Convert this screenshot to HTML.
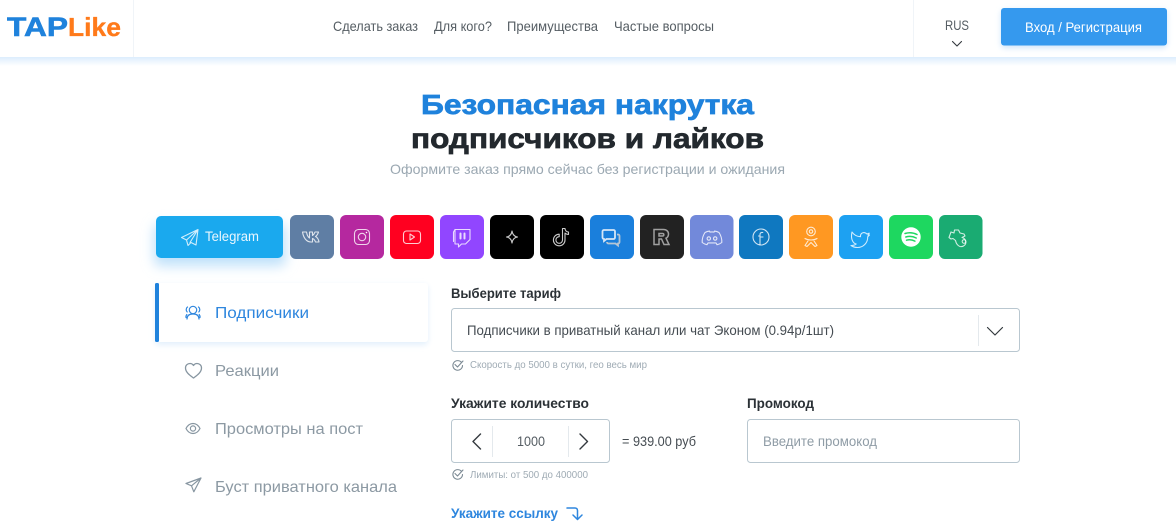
<!DOCTYPE html>
<html lang="ru"><head><meta charset="utf-8"><title>TAPLike</title>
<style>
html,body{margin:0;padding:0;width:1176px;height:526px;overflow:hidden;background:#fff}
svg{position:absolute;left:0;top:0;display:block}
text{font-family:"Liberation Sans","DejaVu Sans",sans-serif;white-space:pre}
.n{font-size:14px;fill:#555d63}
.b{font-weight:700;font-size:13.500px;fill:#2b3136}
.t{font-weight:700;font-size:28px;stroke-width:.7px}
.s{font-size:16px;fill:#8c99a3}
.h{font-size:10.500px;fill:#9fabb4}
.ic{fill:none;stroke:#fff;stroke-width:1.1;stroke-linecap:round;stroke-linejoin:round;opacity:.8}
.g{fill:none;stroke:#8796a1;stroke-linecap:round;stroke-linejoin:round}
.d{fill:none;stroke:#33393e;stroke-linecap:round;stroke-linejoin:round}
</style></head><body>
<svg width="1176" height="526" viewBox="0 0 1176 526" xmlns="http://www.w3.org/2000/svg">
<defs>
<linearGradient id="hs" x1="0" y1="0" x2="0" y2="1"><stop offset="0" stop-color="#dcedfd"/><stop offset="1" stop-color="#fff"/></linearGradient>
<filter id="f1" x="-20%" y="-50%" width="140%" height="220%"><feGaussianBlur stdDeviation="6"/></filter>
<filter id="f2" x="-10%" y="-30%" width="120%" height="170%"><feGaussianBlur stdDeviation="3"/></filter>
<filter id="f3" x="-10%" y="-40%" width="120%" height="200%"><feGaussianBlur stdDeviation="3"/></filter>
</defs>
<!-- header -->
<rect x="0" y="57" width="1176" height="9" fill="url(#hs)"/>
<rect x="133" y="0" width="1" height="57" fill="#f0f4f8"/>
<rect x="913" y="0" width="1" height="57" fill="#f0f4f8"/>
<text x="7" y="36" textLength="61" lengthAdjust="spacingAndGlyphs" style="font-weight:700;font-size:27px;fill:#1f82dc;stroke:#1f82dc;stroke-width:.6px">TAP</text>
<text x="68" y="36" textLength="53" lengthAdjust="spacingAndGlyphs" style="font-weight:700;font-size:26px;fill:#ff7a1a;stroke:#ff7a1a;stroke-width:.3px">Like</text>
<text class="n" x="333" y="31" textLength="85" lengthAdjust="spacingAndGlyphs">Сделать заказ</text>
<text class="n" x="434" y="31" textLength="58" lengthAdjust="spacingAndGlyphs">Для кого?</text>
<text class="n" x="507" y="31" textLength="91" lengthAdjust="spacingAndGlyphs">Преимущества</text>
<text class="n" x="614" y="31" textLength="100" lengthAdjust="spacingAndGlyphs">Частые вопросы</text>
<text class="n" x="945" y="30" textLength="24" lengthAdjust="spacingAndGlyphs" style="font-size:13.500px">RUS</text>
<path d="M952.500 41.500l4.500 4.500 4.500-4.500" class="d" style="stroke-width:1.100px"/>
<rect x="1001" y="10" width="166" height="38" rx="4" fill="#cfe5fa" filter="url(#f2)"/>
<rect x="1001" y="8" width="166" height="37.500" rx="3" fill="#3599ee"/>
<text x="1025" y="32" textLength="117" lengthAdjust="spacingAndGlyphs" style="font-size:14px;fill:#fff">Вход / Регистрация</text>
<!-- title -->
<text class="t" x="421" y="114" textLength="333" lengthAdjust="spacingAndGlyphs" fill="#1f82dc" stroke="#1f82dc">Безопасная накрутка</text>
<text class="t" x="411" y="148" textLength="353" lengthAdjust="spacingAndGlyphs" fill="#23292e" stroke="#23292e">подписчиков и лайков</text>
<text x="390" y="174" textLength="395" lengthAdjust="spacingAndGlyphs" style="font-size:14px;fill:#9ba8b2">Оформите заказ прямо сейчас без регистрации и ожидания</text>
<!-- tabs -->
<rect x="154" y="224" width="132" height="42" rx="6" fill="#bfe1fa" filter="url(#f1)"/>
<rect x="156" y="216" width="127" height="42" rx="5" fill="#1aa9ee"/>
<path class="ic" d="M198 229.500L181.500 237.500l5 2.500 1.500 5.500 3-3 5 2.500zM186.500 240L198 229.500 190 242.500"/>
<text x="205" y="241" textLength="54" lengthAdjust="spacingAndGlyphs" style="font-size:13.500px;fill:#e8f6fe">Telegram</text>
<g>
<rect x="290" y="215" width="44" height="44" rx="6" fill="#5f7ea4"/>
<rect x="340" y="215" width="44" height="44" rx="6" fill="#b5289f"/>
<rect x="390" y="215" width="44" height="44" rx="6" fill="#ff0020"/>
<rect x="440" y="215" width="44" height="44" rx="6" fill="#9146ff"/>
<rect x="490" y="215" width="44" height="44" rx="6" fill="#000"/>
<rect x="540" y="215" width="44" height="44" rx="6" fill="#000"/>
<rect x="590" y="215" width="44" height="44" rx="6" fill="#1a7fdc"/>
<rect x="640" y="215" width="44" height="44" rx="6" fill="#222"/>
<rect x="690" y="215" width="43.500" height="44" rx="6" fill="#7289da"/>
<rect x="739" y="215" width="44" height="44" rx="6" fill="#0f78c0"/>
<rect x="789" y="215" width="44" height="44" rx="6" fill="#ff9822"/>
<rect x="839" y="215" width="44" height="44" rx="6" fill="#1da1f2"/>
<rect x="889" y="215" width="44" height="44" rx="6" fill="#1ed760"/>
<rect x="939" y="215" width="43.500" height="44" rx="6" fill="#1aab72"/>
</g>
<!-- vk -->
<path class="ic" d="M303 232h3.500c.5 3 1.500 5 3 6v-6h3v3.500c1-.7 2-2 2.500-3.500h3.500c-.5 2-2 4-3 4.500 1.500.7 3 2.500 3.500 5.500h-3.500c-.5-1.500-1.500-3-3-3.500v3.500h-1.500c-4.500 0-7.500-4-8.500-10z"/>
<!-- insta -->
<rect class="ic" x="354.500" y="229.500" width="15" height="15" rx="4"/><circle class="ic" cx="362" cy="237" r="3.700"/><circle cx="366.500" cy="232.500" r=".8" fill="#fff"/>
<!-- youtube -->
<rect class="ic" x="403.500" y="231" width="17" height="12.500" rx="3"/><path class="ic" d="M410 234l4.500 3-4.500 3z"/>
<!-- twitch -->
<path class="ic" d="M455 229.500h15v10l-4.500 4.500h-4l-3 3v-3h-3.500zM455 229.500l-1.500 2.500v9.500"/><path class="ic" style="stroke-width:2px" d="M460.500 233.500v5M464.500 233.500v5"/>
<!-- sparkle -->
<path class="ic" d="M512 231c.5 3.500 2 5.500 5.500 6-3.500.5-5 2.500-5.500 6-.5-3.500-2-5.500-5.500-6 3.500-.5 5-2.500 5.500-6z"/>
<!-- tiktok -->
<path class="ic" d="M562.500 228.500v11.500a3.300 3.300 0 1 1-3.300-3.300v-2.500a5.800 5.800 0 1 0 5.800 5.800v-7c1 1 2 1.500 3.500 1.500v-2.500c-2 0-3.500-1.500-3.500-3.500z"/>
<!-- chat -->
<path d="M604 230h9.500a1.500 1.500 0 0 1 1.500 1.500v6a1.500 1.500 0 0 1-1.500 1.500h-7l-2.500 2v-2a1.500 1.500 0 0 1-1.500-1.500v-6a1.500 1.500 0 0 1 1.500-1.500z" fill="none" stroke="#d5e6f7" stroke-width="1.800"/>
<path d="M617 234.500h1a1.500 1.500 0 0 1 1.500 1.500v6a1.500 1.500 0 0 1-1.500 1.500v2l-2.500-2h-7a1.500 1.500 0 0 1-1.500-1.500" fill="none" stroke="#b7c6d4" stroke-width="1.800"/>
<!-- R -->
<path d="M654 229.500h9.500c3 0 5 2 5 4.500 0 2-1 3.500-2.500 4.200l3 6.300h-5l-2.500-5.500h-2.500v5.500H654zM659 233.500v2.500h3.500c1.800 0 1.800-2.500 0-2.500z" fill="none" stroke="#a0a0a0" stroke-width="1.500"/>
<!-- discord -->
<path class="ic" d="M705 232.500c1.500-.8 3-1.200 4.500-1.400l.5 1c1.300-.2 2.700-.2 4 0l.5-1c1.500.2 3 .6 4.500 1.400 2 3 3 6.500 2.800 10-1.400 1.100-3 1.800-4.800 2.200l-1-1.800h-8l-1 1.800c-1.800-.4-3.400-1.100-4.800-2.200-.2-3.500.8-7 2.800-10z"/><circle class="ic" cx="708.800" cy="238.500" r="1.700"/><circle class="ic" cx="715.200" cy="238.500" r="1.700"/>
<!-- fb -->
<circle class="ic" cx="761" cy="237" r="8"/><path class="ic" d="M760 245v-9h-1.500M760 236.500v-2c0-1.500 1-2.200 2.800-2M760.500 237h2.500"/>
<!-- ok -->
<circle class="ic" cx="811" cy="231.500" r="4.300"/><circle class="ic" cx="811" cy="231.500" r="1.700"/><path class="ic" d="M805 238.500c3.500 2 8.500 2 12 0M808 241l-3 4.500 2 1 4-4 4 4 2-1-3-4.500"/>
<!-- twitter -->
<path class="ic" d="M852 232c2 3 5 4.500 8.500 4.700-.4-3 2.500-5 5-3.700.8.400 1 .7 1.500 1l2.200-.8-1.200 2 1.500-.2-1.800 1.800c.2 6-4.300 10.700-10.200 10.700-2.500 0-4.700-.7-6.500-2 2 .2 3.700-.3 5.200-1.500-2.500-.5-6-4-4.200-12z"/>
<!-- spotify -->
<circle cx="911" cy="237" r="9.700" fill="#fff"/>
<path d="M905 233.500c4-1.200 8.500-.8 12 1M905.800 237c3.400-1 7.300-.6 10.400 1M906.500 240.200c2.800-.8 5.800-.5 8.400.9" fill="none" stroke="#1ed760" stroke-width="1.500" stroke-linecap="round"/>
<!-- chameleon -->
<path class="ic" d="M951 232l3 1 .5-3h4l1.500 3 4 1 1 2-3 1.500c3.500 1 4.500 4 3.500 6.500-1 2-3.500 3-5.500 2.500-2-.6-4-3-4.500-6l-2.500-2-2 .5-2-1.500z"/><circle class="ic" cx="964" cy="241.500" r="1.800"/>
<!-- sidebar -->
<rect x="155" y="285" width="273" height="60" rx="4" fill="#e3f0fc" filter="url(#f3)"/>
<rect x="155" y="283" width="273" height="59" rx="3" fill="#fff"/>
<rect x="155" y="283" width="4" height="59" rx="1.500" fill="#1f82dc"/>
<g fill="none" stroke="#2e86de" stroke-width="1.200" stroke-linecap="round" stroke-linejoin="round">
<circle cx="193" cy="310" r="3.700"/><path d="M187 319c0-3.500 2.500-5 6-5s6 1.500 6 5M187.500 307c-1.500 1-1.800 3.500-.3 5M198.500 307c1.500 1 1.800 3.500.3 5M186 317.500c-.2-1 0-2 .8-3M200 317.500c.2-1 0-2-.8-3"/>
</g>
<text x="215" y="318" textLength="94" lengthAdjust="spacingAndGlyphs" style="font-size:16px;fill:#2e86de">Подписчики</text>
<path class="g" style="stroke-width:1.300px" d="M193.500 378c-3-2.300-8-5.500-8-10 0-2.800 2.100-4.500 4.500-4.500 1.500 0 2.800.8 3.500 2 .7-1.200 2-2 3.500-2 2.400 0 4.500 1.700 4.500 4.500 0 4.500-5 7.700-8 10z"/>
<text class="s" x="215" y="376" textLength="64" lengthAdjust="spacingAndGlyphs">Реакции</text>
<path class="g" style="stroke-width:1.200px" d="M186 428.500c1.800-3.500 4.300-5 7-5s5.200 1.500 7 5c-1.800 3.500-4.300 5-7 5s-5.200-1.500-7-5z"/><circle class="g" style="stroke-width:1.200px" cx="193" cy="428.500" r="2.600"/>
<text class="s" x="215" y="434" textLength="148" lengthAdjust="spacingAndGlyphs">Просмотры на пост</text>
<path class="g" style="stroke-width:1.200px" d="M201 478l-15 5.500 5.500 2.300 2.300 6zM191.500 485.800L201 478"/>
<text class="s" x="215" y="492" textLength="182" lengthAdjust="spacingAndGlyphs">Буст приватного канала</text>
<!-- tariff -->
<text class="b" x="451" y="298" textLength="110" lengthAdjust="spacingAndGlyphs">Выберите тариф</text>
<rect x="451.500" y="308.500" width="568" height="43" rx="3" fill="#fff" stroke="#b9c7d0"/>
<text x="467" y="335" textLength="367" lengthAdjust="spacingAndGlyphs" style="font-size:14px;fill:#454c52">Подписчики в приватный канал или чат Эконом (0.94р/1шт)</text>
<rect x="978" y="315" width="1" height="31" fill="#e4e9ed"/>
<path class="d" style="stroke-width:1.200px" d="M987.500 327.500l7.500 7.500 7.500-7.500"/>
<g fill="none" stroke="#7c8a94" stroke-width="1.100" stroke-linecap="round" stroke-linejoin="round"><path d="M461.500 362.500a4.800 4.800 0 1 0 1 3M455 364.500l2.500 2.500 5.500-6"/></g>
<text class="h" x="470" y="368" textLength="177" lengthAdjust="spacingAndGlyphs">Скорость до 5000 в сутки, гео весь мир</text>
<!-- qty -->
<text class="b" x="451" y="408" textLength="138" lengthAdjust="spacingAndGlyphs">Укажите количество</text>
<rect x="451.500" y="419.500" width="158" height="43" rx="3" fill="#fff" stroke="#b9c7d0"/>
<rect x="492" y="426" width="1" height="31" fill="#e4e9ed"/>
<rect x="568" y="426" width="1" height="31" fill="#e4e9ed"/>
<path class="d" style="stroke-width:1.400px" d="M480.500 434l-7.500 7.500 7.500 7.500M580 434l7.500 7.500-7.500 7.500"/>
<text x="517" y="446" textLength="28" lengthAdjust="spacingAndGlyphs" style="font-size:14px;fill:#555d63">1000</text>
<text x="622" y="446" textLength="74" lengthAdjust="spacingAndGlyphs" style="font-size:14px;fill:#454c52">= 939.00 руб</text>
<g fill="none" stroke="#7c8a94" stroke-width="1.100" stroke-linecap="round" stroke-linejoin="round"><path d="M461.500 471.500a4.800 4.800 0 1 0 1 3M455 473.500l2.500 2.500 5.500-6"/></g>
<text class="h" x="470" y="478" textLength="118" lengthAdjust="spacingAndGlyphs">Лимиты: от 500 до 400000</text>
<text x="451" y="518" textLength="107" lengthAdjust="spacingAndGlyphs" style="font-size:13.500px;font-weight:700;fill:#2e86de">Укажите ссылку</text>
<path d="M567 508h8c1.500 0 2.500 1 2.500 2.500v9M573 515l4.500 4.500 4.500-4.500" fill="none" stroke="#2e86de" stroke-width="1.500" stroke-linecap="round" stroke-linejoin="round"/>
<!-- promo -->
<text class="b" x="747" y="408" textLength="67" lengthAdjust="spacingAndGlyphs">Промокод</text>
<rect x="747.500" y="419.500" width="272" height="43" rx="3" fill="#fff" stroke="#b9c7d0"/>
<text x="763" y="446" textLength="114" lengthAdjust="spacingAndGlyphs" style="font-size:14px;fill:#8f9ca6">Введите промокод</text>
</svg>
</body></html>
